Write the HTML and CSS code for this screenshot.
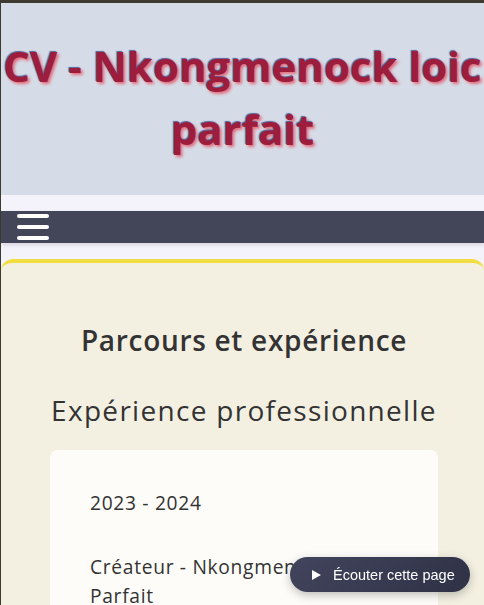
FILE: index.html
```html
<!DOCTYPE html>
<html lang="fr">
<head>
<meta charset="utf-8">
<title>CV - Nkongmenock loic parfait</title>
<link rel="stylesheet" href="styles.css">
</head>
<body>
<header class="site-header">
  <h1 class="title">CV - Nkongmenock loic<br>parfait</h1>
</header>
<nav class="nav">
  <button class="burger" aria-label="Menu"><span></span><span></span><span></span></button>
</nav>
<main class="section">
  <h2 class="section-title">Parcours et expérience</h2>
  <h3 class="sub-title">Expérience professionnelle</h3>
  <div class="card">
    <p class="date">2023 - 2024</p>
    <p class="role">Créateur - Nkongmenock Loic Parfait</p>
    <p class="desc">Conception et développement de projets personnels.</p>
  </div>
</main>
<button class="listen"><span class="play"></span>Écouter cette page</button>
</body>
</html>
```
FILE: styles.css
```css
html {
  background: #3d3a30;
}
body {
  margin: 3px 0 0 1px;
  background: #f4f3fc;
  font-family: "Open Sans", "DejaVu Sans", sans-serif;
  color: #333;
  overflow: hidden;
}
.site-header {
  background: #d5dce7;
  height: 192px;
  padding-top: 31px;
  box-sizing: border-box;
}
.title {
  margin: 0;
  text-align: center;
  font-size: 42px;
  line-height: 63px;
  font-weight: 700;
  color: #9e1c3c;
  white-space: nowrap;
  text-shadow: -1px -1px 1px rgba(40, 60, 130, 0.75), 2px 2px 3px rgba(235, 70, 85, 0.75);
}
.nav {
  margin-top: 16px;
  height: 32px;
  background: #434659;
  box-shadow: 0 2px 4px rgba(0, 0, 0, 0.12);
  display: flex;
  align-items: center;
  padding-left: 16px;
}
.burger {
  background: none;
  border: 0;
  padding: 0;
  width: 32px;
  display: flex;
  flex-direction: column;
  gap: 7.5px;
}
.burger span {
  display: block;
  height: 3.5px;
  width: 32px;
  background: #fff;
  border-radius: 2px;
}
.section {
  margin-top: 16px;
  background: #f3f0e2;
  border-top: 4px solid #f2dd42;
  border-radius: 12px 12px 0 0;
  padding: 61px 46px 40px 49px;
  min-height: 400px;
}
.section-title {
  margin: 0 -20px;
  text-align: center;
  font-size: 28px;
  line-height: 1.2;
  font-weight: 600;
  letter-spacing: 0.7px;
  color: #333;
}
.sub-title {
  margin: 36px -20px 0;
  text-align: center;
  font-size: 28px;
  line-height: 1.2;
  font-weight: 400;
  letter-spacing: 1.3px;
  color: #333;
}
.card {
  margin-top: 23px;
  background: #fdfcf8;
  border-radius: 8px;
  padding: 39px 40px 30px;
}
.card p {
  margin: 0;
  font-size: 19.2px;
  line-height: 1.5;
  letter-spacing: 0.7px;
  color: #333;
}
.card .role {
  margin-top: 35px;
}
.card .desc {
  margin-top: 20px;
}
.listen {
  position: fixed;
  left: 290px;
  top: 557px;
  width: 180px;
  height: 35px;
  border: 0;
  border-radius: 18px;
  background: linear-gradient(135deg, #41445c, #2f3246);
  color: #fff;
  font-family: "Liberation Sans", Arial, sans-serif;
  font-size: 14.5px;
  display: flex;
  align-items: center;
  padding: 0 0 0 22px;
  box-shadow: 0 3px 10px rgba(0, 0, 0, 0.25);
  gap: 12px;
}
.play {
  width: 0;
  height: 0;
  border-left: 9px solid #fff;
  border-top: 5.5px solid transparent;
  border-bottom: 5.5px solid transparent;
}
```
